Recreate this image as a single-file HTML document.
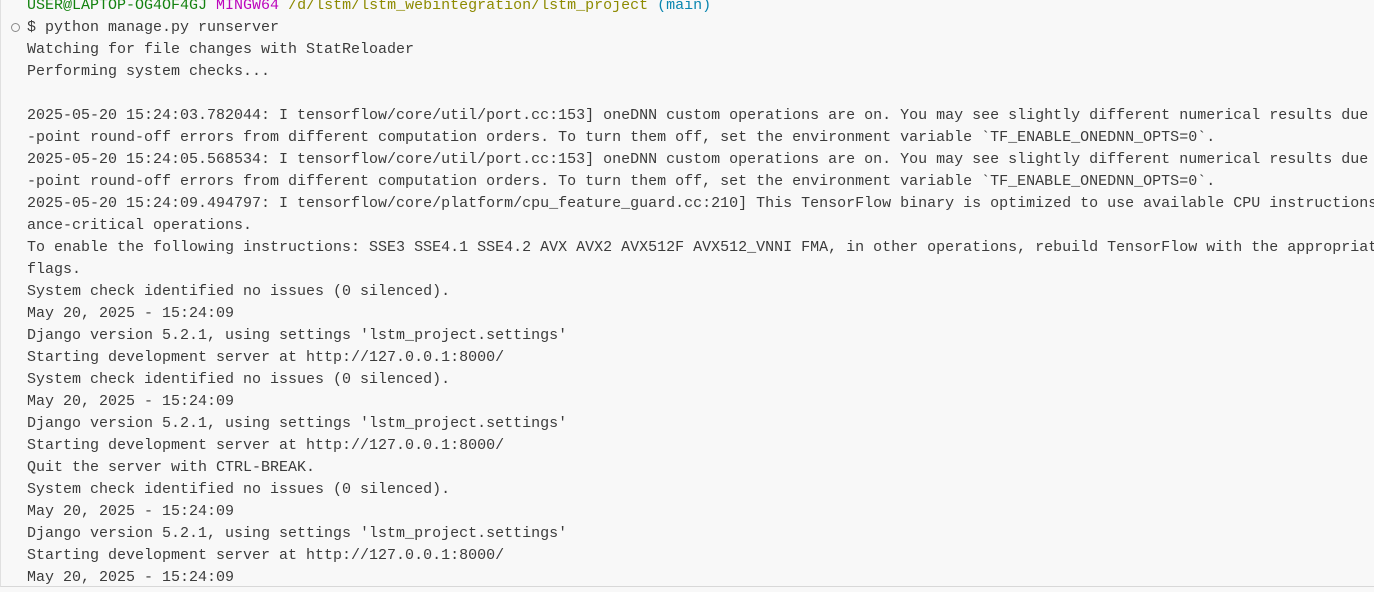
<!DOCTYPE html>
<html><head><meta charset="utf-8"><style>
html,body{margin:0;padding:0;width:1374px;height:592px;overflow:hidden;background:#f8f8f8;}
.wrap{position:absolute;left:0;top:0;width:1374px;height:587px;border-left:1px solid #e0e0e0;border-bottom:1px solid #d8d8d8;box-sizing:border-box;overflow:hidden;}
pre{position:absolute;left:26px;top:-5px;margin:0;font-family:"Liberation Mono","DejaVu Sans Mono",monospace;font-size:15px;line-height:22px;color:#3b3b3b;white-space:pre;}
.g{color:#13820f}.m{color:#bc05bc}.y{color:#8d8a00}.c{color:#0a86b0}
.dot{position:absolute;left:10px;top:23px;width:7px;height:7px;border:1px solid #8a8a8a;border-radius:50%;}
</style></head><body><div class="wrap">
<div class="dot"></div>
<pre><span class="g">USER@LAPTOP-OG4OF4GJ</span> <span class="m">MINGW64</span> <span class="y">/d/lstm/lstm_webintegration/lstm_project</span> <span class="c">(main)</span>
$ python manage.py runserver
Watching for file changes with StatReloader
Performing system checks...

2025-05-20 15:24:03.782044: I tensorflow/core/util/port.cc:153] oneDNN custom operations are on. You may see slightly different numerical results due to floating
-point round-off errors from different computation orders. To turn them off, set the environment variable `TF_ENABLE_ONEDNN_OPTS=0`.
2025-05-20 15:24:05.568534: I tensorflow/core/util/port.cc:153] oneDNN custom operations are on. You may see slightly different numerical results due to floating
-point round-off errors from different computation orders. To turn them off, set the environment variable `TF_ENABLE_ONEDNN_OPTS=0`.
2025-05-20 15:24:09.494797: I tensorflow/core/platform/cpu_feature_guard.cc:210] This TensorFlow binary is optimized to use available CPU instructions in perform
ance-critical operations.
To enable the following instructions: SSE3 SSE4.1 SSE4.2 AVX AVX2 AVX512F AVX512_VNNI FMA, in other operations, rebuild TensorFlow with the appropriate compiler
flags.
System check identified no issues (0 silenced).
May 20, 2025 - 15:24:09
Django version 5.2.1, using settings 'lstm_project.settings'
Starting development server at http://127.0.0.1:8000/
System check identified no issues (0 silenced).
May 20, 2025 - 15:24:09
Django version 5.2.1, using settings 'lstm_project.settings'
Starting development server at http://127.0.0.1:8000/
Quit the server with CTRL-BREAK.
System check identified no issues (0 silenced).
May 20, 2025 - 15:24:09
Django version 5.2.1, using settings 'lstm_project.settings'
Starting development server at http://127.0.0.1:8000/
May 20, 2025 - 15:24:09</pre>
</div></body></html>
